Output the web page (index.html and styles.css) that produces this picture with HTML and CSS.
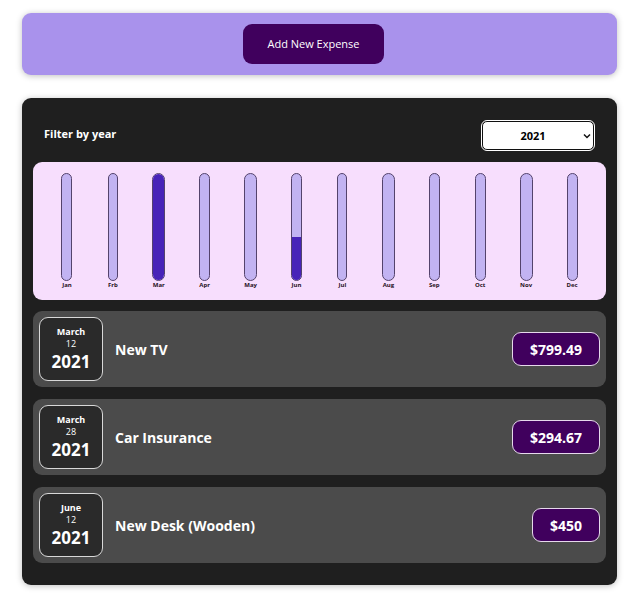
FILE: index.html
```html
<!DOCTYPE html>
<html lang="en">
<head>
<meta charset="utf-8">
<meta name="viewport" content="width=device-width, initial-scale=1">
<title>Expenses</title>
<link rel="stylesheet" href="styles.css">
</head>
<body>
<section class="new-expense">
  <button type="button" class="new-expense__button">Add New Expense</button>
</section>
<main class="expenses">
  <div class="filter">
    <label class="filter__label" for="year">Filter by year</label>
    <div class="filter__control">
      <select class="filter__select" id="year">
        <option>2022</option>
        <option selected>2021</option>
        <option>2020</option>
        <option>2019</option>
      </select>
      <svg class="filter__arrow" viewBox="0 0 8 6" aria-hidden="true"><path d="M1 1.5 4 4.5 7 1.5" fill="none" stroke="#111" stroke-width="1.5"/></svg>
    </div>
  </div>
  <div class="chart">
    <div class="chart__month"><div class="bar"><div class="bar__fill" style="height:0%"></div></div><span class="chart__label">Jan</span></div>
    <div class="chart__month"><div class="bar bar--narrow"><div class="bar__fill" style="height:0%"></div></div><span class="chart__label">Frb</span></div>
    <div class="chart__month"><div class="bar bar--wide"><div class="bar__fill" style="height:100%"></div></div><span class="chart__label">Mar</span></div>
    <div class="chart__month"><div class="bar"><div class="bar__fill" style="height:0%"></div></div><span class="chart__label">Apr</span></div>
    <div class="chart__month"><div class="bar bar--wide"><div class="bar__fill" style="height:0%"></div></div><span class="chart__label">May</span></div>
    <div class="chart__month"><div class="bar"><div class="bar__fill" style="height:41%"></div></div><span class="chart__label">Jun</span></div>
    <div class="chart__month"><div class="bar bar--narrow"><div class="bar__fill" style="height:0%"></div></div><span class="chart__label">Jul</span></div>
    <div class="chart__month"><div class="bar bar--wide"><div class="bar__fill" style="height:0%"></div></div><span class="chart__label">Aug</span></div>
    <div class="chart__month"><div class="bar"><div class="bar__fill" style="height:0%"></div></div><span class="chart__label">Sep</span></div>
    <div class="chart__month"><div class="bar"><div class="bar__fill" style="height:0%"></div></div><span class="chart__label">Oct</span></div>
    <div class="chart__month"><div class="bar bar--wide"><div class="bar__fill" style="height:0%"></div></div><span class="chart__label">Nov</span></div>
    <div class="chart__month"><div class="bar"><div class="bar__fill" style="height:0%"></div></div><span class="chart__label">Dec</span></div>
  </div>
  <ul class="list">
    <li class="item">
      <div class="date"><span class="date__month">March</span><span class="date__day">12</span><span class="date__year">2021</span></div>
      <h2 class="item__title">New TV</h2>
      <div class="item__price">$799.49</div>
    </li>
    <li class="item">
      <div class="date"><span class="date__month">March</span><span class="date__day">28</span><span class="date__year">2021</span></div>
      <h2 class="item__title">Car Insurance</h2>
      <div class="item__price">$294.67</div>
    </li>
    <li class="item">
      <div class="date"><span class="date__month">June</span><span class="date__day">12</span><span class="date__year">2021</span></div>
      <h2 class="item__title">New Desk (Wooden)</h2>
      <div class="item__price">$450</div>
    </li>
  </ul>
</main>
</body>
</html>
```
FILE: styles.css
```css
* {
  box-sizing: border-box;
}

body {
  margin: 0;
  padding: 13px 27px 15px 22px;
  background: #fff;
  font-family: "Open Sans", "Noto Sans", sans-serif;
}

.new-expense,
.expenses {
  border-radius: 9px;
  box-shadow: 0 1px 6px rgba(0, 0, 0, 0.25);
}

.new-expense {
  display: flex;
  justify-content: center;
  padding: 11px;
  background: #a992ec;
}

.new-expense__button {
  height: 40px;
  margin-right: 12px;
  padding: 0 24px;
  border: 0;
  border-radius: 9px;
  background: #40005d;
  color: #fff;
  font: 400 11px/16px "Open Sans", "Noto Sans", sans-serif;
}

.expenses {
  margin-top: 23px;
  padding: 23px 11px 22px;
  background: #1f1f1f;
}

.filter {
  display: flex;
  align-items: center;
  justify-content: space-between;
  padding: 0 12px 0 11px;
  color: #fff;
}

.filter__label {
  padding-bottom: 4px;
  font-size: 11px;
  line-height: 16px;
  font-weight: 700;
}

.filter__control {
  display: flex;
  position: relative;
}

.filter__select {
  appearance: none;
  width: 112px;
  height: 29px;
  padding: 0 10px 0 0;
  border: 1px solid #101010;
  border-radius: 5px;
  outline: 1px solid #fff;
  background: #fff;
  color: #000;
  font: 700 11px/16px "Open Sans", "Noto Sans", sans-serif;
  text-align: center;
}

.filter__arrow {
  position: absolute;
  top: 12px;
  right: 3px;
  width: 8px;
  height: 6px;
  pointer-events: none;
}

.chart {
  display: grid;
  grid-template-columns: repeat(12, 1fr);
  margin-top: 12px;
  padding: 11px;
  border-radius: 9px;
  background: #f7defd;
}

.chart__month {
  display: flex;
  flex-direction: column;
  align-items: center;
  height: 116px;
}

.bar {
  display: flex;
  flex-direction: column;
  justify-content: flex-end;
  flex: none;
  width: 11px;
  height: 108px;
  overflow: hidden;
  border: 1px solid #54436c;
  border-radius: 9px;
  background: #c2b3f2;
}

.bar--narrow {
  width: 10px;
}

.bar--wide {
  width: 13px;
}

.bar__fill {
  background: #4723b8;
}

.chart__label {
  color: #1f1022;
  font-size: 6px;
  line-height: 8px;
  font-weight: 700;
}

.list {
  display: grid;
  gap: 12px;
  margin: 11px 0 0;
  padding: 0;
  list-style: none;
}

.item {
  display: flex;
  align-items: center;
  gap: 12px;
  padding: 6px;
  border-radius: 9px;
  background: #4b4b4b;
}

.date {
  display: flex;
  flex-direction: column;
  align-items: center;
  justify-content: center;
  width: 64px;
  height: 64px;
  padding-top: 2px;
  border: 1px solid #d8d8d8;
  border-radius: 9px;
  background: #2a2a2a;
  color: #fff;
}

.date__month {
  font-size: 9px;
  line-height: 12px;
  font-weight: 700;
}

.date__day {
  font-size: 9px;
  line-height: 12px;
}

.date__year {
  font-size: 17px;
  line-height: 24px;
  font-weight: 700;
}

.item__title {
  flex: 1;
  margin: 0;
  padding-top: 2px;
  color: #fff;
  font-size: 14px;
  line-height: 20px;
  font-weight: 700;
}

.item__price {
  padding: 7px 17px 5px;
  border: 1px solid #e6d8ec;
  border-radius: 9px;
  background: #40005d;
  color: #fff;
  font-size: 14px;
  line-height: 20px;
  font-weight: 700;
}
```
